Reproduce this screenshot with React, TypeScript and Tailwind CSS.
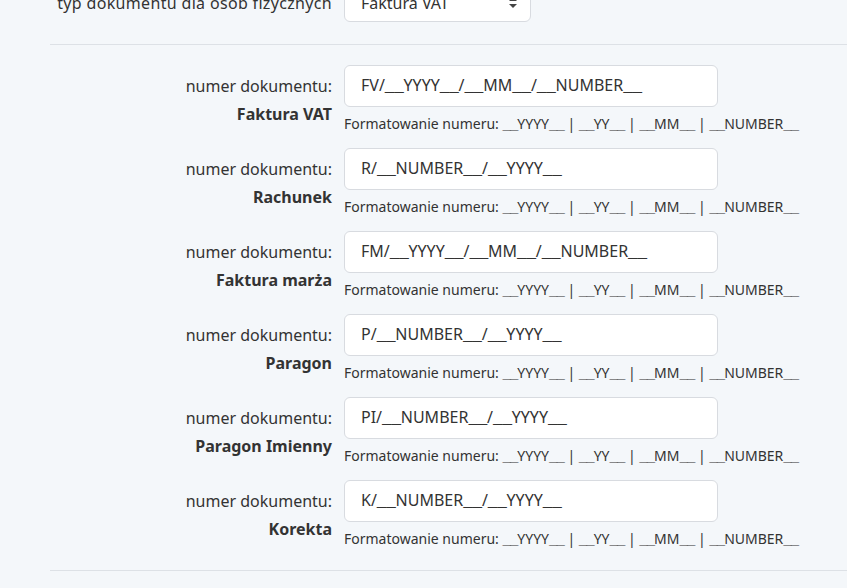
import React from "react";

const rows = [
  { name: "Faktura VAT", value: "FV/__YYYY__/__MM__/__NUMBER__" },
  { name: "Rachunek", value: "R/__NUMBER__/__YYYY__" },
  { name: "Faktura marża", value: "FM/__YYYY__/__MM__/__NUMBER__" },
  { name: "Paragon", value: "P/__NUMBER__/__YYYY__" },
  { name: "Paragon Imienny", value: "PI/__NUMBER__/__YYYY__" },
  { name: "Korekta", value: "K/__NUMBER__/__YYYY__" },
];

function Under({ text, cls }: { text: string; cls: string }) {
  const parts = text.split(/(_+)/);
  return (
    <>
      {parts.map((p, i) =>
        p.startsWith("_") ? (
          <span
            key={i}
            className={cls}
            style={{ fontFamily: '"Liberation Mono", monospace' }}
          >
            {p}
          </span>
        ) : (
          <React.Fragment key={i}>{p}</React.Fragment>
        )
      )}
    </>
  );
}

export default function App() {
  return (
    <div
      className="min-h-screen w-full overflow-hidden bg-[#f4f7fa] text-[#333]"
      style={{ fontFamily: '"Noto Sans", "Open Sans", sans-serif' }}
    >
      <div className="ml-[50px] -mt-[20px] flex border-b border-[#dde1e6] pb-[22px]">
        <div className="h-[42px] w-[282px] shrink-0 whitespace-nowrap pt-[4px] text-right text-[16px] leading-[38px] tracking-[0.33px]">
          typ dokumentu dla osób fizycznych
        </div>
        <div className="ml-3 flex h-[42px] w-[187px] items-center justify-between rounded-md border border-[#d8dbe0] bg-white pt-[4px] pl-[16px] pr-[12px] text-[16px]">
          <span>Faktura VAT</span>
          <svg width="10" height="14" viewBox="0 0 10 14">
            <path d="M1 5 L5 1 L9 5 Z" fill="#444" />
            <path d="M1 8 L5 12 L9 8 Z" fill="#444" />
          </svg>
        </div>
      </div>
      <div className="ml-[50px] flex flex-col gap-[15px] border-b border-[#dde1e6] pt-5 pb-[22px]">
        {rows.map((r) => (
          <div key={r.name} className="flex">
            <div className="w-[282px] shrink-0 pt-[9px] text-right text-[16px]">
              <div className="leading-[24px]">numer dokumentu:</div>
              <div className="mt-[4px] font-bold leading-[24px]">{r.name}</div>
            </div>
            <div className="ml-3 flex flex-col">
              <div className="flex h-[42px] w-[374px] items-center whitespace-nowrap rounded-md border border-[#d8dbe0] bg-white px-[16px] text-[16px]">
                <span>
                  <Under text={r.value} cls="tracking-[-0.25px]" />
                </span>
              </div>
              <div className="mt-2 h-[18px] whitespace-nowrap text-[14px] leading-[18px]">
                <Under
                  text="Formatowanie numeru: __YYYY__ | __YY__ | __MM__ | __NUMBER__"
                  cls="tracking-[-1px]"
                />
              </div>
            </div>
          </div>
        ))}
      </div>
    </div>
  );
}
